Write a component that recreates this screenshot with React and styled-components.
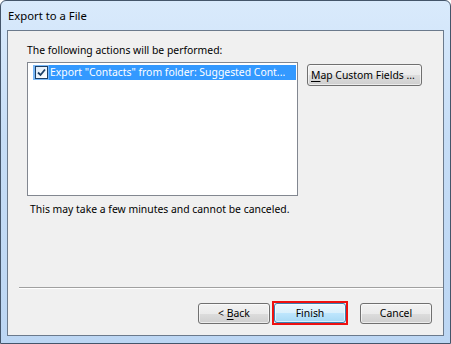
import React from "react";
import styled, { createGlobalStyle } from "styled-components";

const GlobalStyle = createGlobalStyle`
	html, body {
		margin: 0;
		padding: 0;
		background: #ffffff;
	}
	body {
		font-family: "Noto Sans", "Liberation Sans", sans-serif;
		font-size: 10.4px;
		color: #000000;
	}
`;

const Window = styled.div`
	box-sizing: border-box;
	width: 451px;
	height: 344px;
	display: flex;
	flex-direction: column;
	padding: 0 6px 7px 6px;
	border: 1px solid #44556a;
	border-radius: 6px 6px 0 0;
	background: linear-gradient( to bottom, #d9eafc 0%, #c6ddf6 40%, #bcd6f3 100% );
`;

const TitleBar = styled.div`
	height: 29px;
	display: flex;
	align-items: center;
	padding-left: 1px;
	font-size: 11.3px;
	color: #000000;
`;

const Client = styled.div`
	flex: 1;
	display: flex;
	flex-direction: column;
	border: 1px solid #6b7a8c;
	background: #f0f0f0;
	padding: 11px 0 10px 19px;
`;

const Label = styled.div`
	height: 20px;
	line-height: 16px;
`;

const ListArea = styled.div`
	display: flex;
	align-items: flex-start;
	gap: 9px;
`;

const ListBox = styled.div`
	box-sizing: border-box;
	width: 271px;
	height: 134px;
	background: #ffffff;
	border: 1px solid #828790;
	padding: 2px 1px 2px 5px;
`;

const ListRow = styled.div`
	display: flex;
	align-items: center;
	height: 15px;
	background: ${ ( props ) => ( props.selected ? "#3399ff" : "transparent" ) };
	color: ${ ( props ) => ( props.selected ? "#ffffff" : "#000000" ) };
`;

const CheckCell = styled.span`
	display: flex;
	align-items: center;
	justify-content: center;
	flex: none;
	width: 16px;
	height: 15px;
	margin-right: 1px;
	background: #7ab8f7;
`;

const CheckBox = styled.span`
	box-sizing: border-box;
	display: flex;
	align-items: center;
	justify-content: center;
	width: 13px;
	height: 13px;
	border: 1px solid #1c3f66;
	background: linear-gradient( 135deg, #dceaf8, #ffffff );
`;

const RowText = styled.span`
	white-space: nowrap;
	overflow: hidden;
	line-height: 15px;
`;

const Button = styled.button`
	box-sizing: border-box;
	flex: none;
	width: ${ ( props ) => props.width || 73 }px;
	height: ${ ( props ) => props.height || 21 }px;
	padding: 0;
	font-family: inherit;
	font-size: 10.4px;
	color: #000000;
	white-space: nowrap;
	border: 1px solid ${ ( props ) => ( props.primary ? "#3c7fb1" : "#707070" ) };
	border-radius: 3px;
	background: ${ ( props ) => ( props.primary
		? "linear-gradient( to bottom, #eaf6fd 0%, #d9f0fc 50%, #bee6fd 51%, #a7d9f5 100% )"
		: "linear-gradient( to bottom, #f2f2f2 0%, #ebebeb 50%, #dddddd 51%, #cfcfcf 100% )" ) };
	box-shadow: inset 0 0 0 1px rgba( 255, 255, 255, 0.6 );
	text-align: ${ ( props ) => props.align || "center" };
	padding-left: ${ ( props ) => ( props.align === "left" ? "3px" : "0" ) };
	cursor: default;
`;

const MapButton = styled( Button )`
	margin-top: 2px;
`;

const Note = styled.div`
	margin-top: 5px;
	padding-left: 3px;
	line-height: 16px;
`;

const Separator = styled.div`
	margin-top: auto;
	height: 1px;
	background: #a0a0a0;
	border-bottom: 1px solid #ffffff;
	margin-left: -8px;
`;

const ButtonRow = styled.div`
	display: flex;
	justify-content: flex-end;
	align-items: center;
	gap: 12px;
	margin-top: 12px;
	padding-right: 11px;
`;

const FocusMark = styled.span`
	display: flex;
	border: 2px solid #ee1111;
	margin-left: -10px;
`;

const Mnemonic = styled.u`
	text-decoration-thickness: 1px;
	text-underline-offset: 2px;
`;

const CheckIcon = () => (
	<svg width="9" height="9" viewBox="0 0 9 9">
		<path d="M1 4.5 L3.5 7 L8 1.5" fill="none" stroke="#1c3f66" strokeWidth="1.8" />
	</svg>
);

export default function App() {
	return (
		<>
			<GlobalStyle />
			<Window>
				<TitleBar>Export to a File</TitleBar>
				<Client>
					<Label>The following actions will be performed:</Label>
					<ListArea>
						<ListBox>
							<ListRow selected={ true }>
								<CheckCell>
									<CheckBox><CheckIcon /></CheckBox>
								</CheckCell>
								<RowText>Export "Contacts" from folder: Suggested Cont...</RowText>
							</ListRow>
						</ListBox>
						<MapButton width={ 115 } height={ 22 } align="left">
							<Mnemonic>M</Mnemonic>ap Custom Fields ...
						</MapButton>
					</ListArea>
					<Note>This may take a few minutes and cannot be canceled.</Note>
					<Separator />
					<ButtonRow>
						<Button width={ 72 }>&lt; <Mnemonic>B</Mnemonic>ack</Button>
						<FocusMark>
							<Button width={ 72 } height={ 20 } primary={ true }>Finish</Button>
						</FocusMark>
						<Button width={ 72 }>Cancel</Button>
					</ButtonRow>
				</Client>
			</Window>
		</>
	);
}
